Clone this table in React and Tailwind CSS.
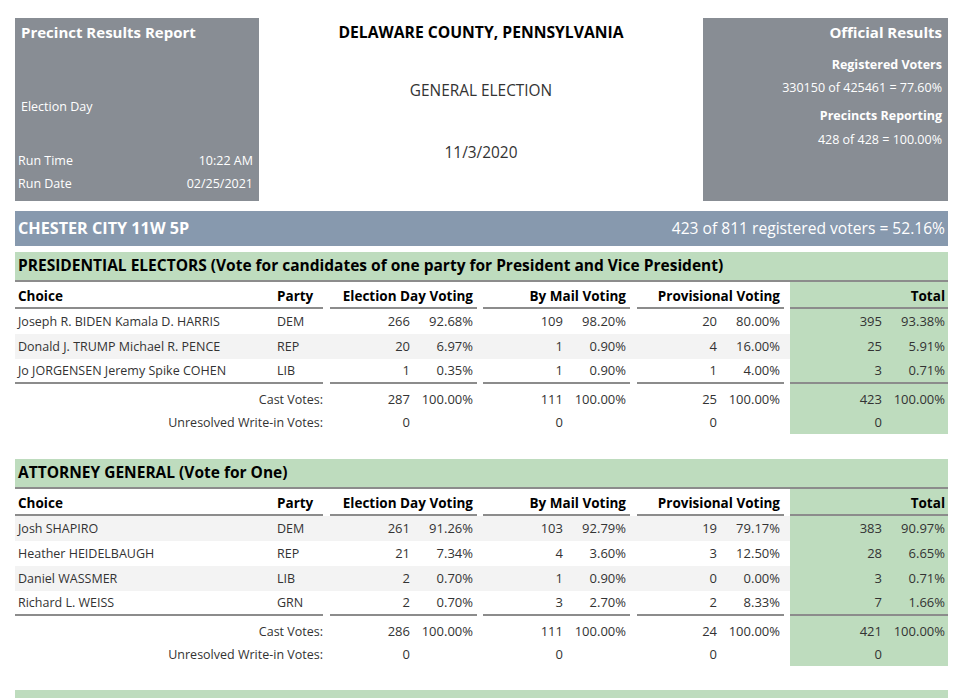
import React from "react";

const font = { fontFamily: '"Open Sans", "Noto Sans", sans-serif' };

const contests = [
  {
    title:
      "PRESIDENTIAL ELECTORS (Vote for candidates of one party for President and Vice President)",
    rows: [
      ["Joseph R. BIDEN Kamala D. HARRIS", "DEM", "266", "92.68%", "109", "98.20%", "20", "80.00%", "395", "93.38%"],
      ["Donald J. TRUMP Michael R. PENCE", "REP", "20", "6.97%", "1", "0.90%", "4", "16.00%", "25", "5.91%"],
      ["Jo JORGENSEN Jeremy Spike COHEN", "LIB", "1", "0.35%", "1", "0.90%", "1", "4.00%", "3", "0.71%"],
    ],
    shadeFirst: false,
    cast: ["287", "100.00%", "111", "100.00%", "25", "100.00%", "423", "100.00%"],
  },
  {
    title: "ATTORNEY GENERAL (Vote for One)",
    rows: [
      ["Josh SHAPIRO", "DEM", "261", "91.26%", "103", "92.79%", "19", "79.17%", "383", "90.97%"],
      ["Heather HEIDELBAUGH", "REP", "21", "7.34%", "4", "3.60%", "3", "12.50%", "28", "6.65%"],
      ["Daniel WASSMER", "LIB", "2", "0.70%", "1", "0.90%", "0", "0.00%", "3", "0.71%"],
      ["Richard L. WEISS", "GRN", "2", "0.70%", "3", "2.70%", "2", "8.33%", "7", "1.66%"],
    ],
    shadeFirst: true,
    cast: ["286", "100.00%", "111", "100.00%", "24", "100.00%", "421", "100.00%"],
  },
];

const line = "border-b-2 border-[#8c8c8c]";

const Pair = ({ a, b, underline, wide }) => (
  <div
    className={`flex h-full items-center ${wide ? "w-[158px] bg-[#bedcbe]" : "w-[147px]"} ${underline ? line : ""}`}
  >
    <div className={`${wide ? "w-[92px]" : "w-[80px]"} text-right`}>{a}</div>
    <div className="w-[63px] text-right">{b}</div>
  </div>
);

const Row = ({ cells, shaded, underline }) => (
  <div className="flex h-[25px] items-center text-[13px] text-[#333]">
    <div className={`flex h-full w-[775px] items-center ${shaded ? "bg-[#f3f3f3]" : ""}`}>
      <div className={`flex h-full w-[308px] items-center pt-[1px] text-[12.5px] ${underline ? line : ""}`}>
        <div className="w-[262px] pl-[3px]">{cells[0]}</div>
        <div>{cells[1]}</div>
      </div>
      <div className="w-[7px]" />
      <Pair a={cells[2]} b={cells[3]} underline={underline} />
      <div className="w-[6px]" />
      <Pair a={cells[4]} b={cells[5]} underline={underline} />
      <div className="w-[7px]" />
      <Pair a={cells[6]} b={cells[7]} underline={underline} />
    </div>
    <Pair a={cells[8]} b={cells[9]} underline={underline} wide />
  </div>
);

const SummaryRow = ({ label, vals }) => (
  <div className="flex h-[23px] items-center text-[13px] text-[#333]">
    <div className="flex h-full w-[775px] items-center">
      <div className="w-[308px] pt-[1px] text-right text-[12.5px]">{label}</div>
      <div className="w-[7px]" />
      <Pair a={vals[0]} b={vals[1]} />
      <div className="w-[6px]" />
      <Pair a={vals[2]} b={vals[3]} />
      <div className="w-[7px]" />
      <Pair a={vals[4]} b={vals[5]} />
    </div>
    <Pair a={vals[6]} b={vals[7]} wide />
  </div>
);

const Contest = ({ c }) => (
  <div>
    <div className={`flex h-[30px] items-center bg-[#bedcbe] pl-[3px] text-[15.5px] font-bold text-black ${line}`}>
      {c.title}
    </div>
    <div className="flex h-[27px] items-end text-[13.5px] font-bold text-black">
      <div className="flex h-full w-[775px] items-end">
        <div className={`flex w-[308px] pb-[1px] ${line}`}>
          <div className="w-[262px] pl-[3px]">Choice</div>
          <div>Party</div>
        </div>
        <div className="w-[7px]" />
        <div className={`w-[147px] pb-[1px] pr-[4px] text-right ${line}`}>Election Day Voting</div>
        <div className="w-[6px]" />
        <div className={`w-[147px] pb-[1px] pr-[4px] text-right ${line}`}>By Mail Voting</div>
        <div className="w-[7px]" />
        <div className={`w-[147px] pb-[1px] pr-[4px] text-right ${line}`}>Provisional Voting</div>
      </div>
      <div className={`flex h-full w-[158px] items-end justify-end bg-[#bedcbe] pr-[3px] pb-[1px] ${line}`}>
        Total
      </div>
    </div>
    {c.rows.map((r, i) => (
      <Row
        key={i}
        cells={r}
        shaded={c.shadeFirst ? i % 2 === 0 : i % 2 === 1}
        underline={i === c.rows.length - 1}
      />
    ))}
    <div className="flex h-[4px]">
      <div className="w-[775px]" />
      <div className="w-[158px] bg-[#bedcbe]" />
    </div>
    <SummaryRow label="Cast Votes:" vals={c.cast} />
    <SummaryRow label="Unresolved Write-in Votes:" vals={["0", "", "0", "", "0", "", "0", ""]} />
  </div>
);

export default function App() {
  return (
    <div className="h-[698px] overflow-hidden bg-white pl-[15px] pt-[18px]" style={font}>
      <div className="w-[933px]">
        <div className="flex h-[183px]">
          <div className="relative w-[244px] bg-[#888d94] text-white">
            <div className="pl-[6px] pt-[3px] text-[15px] font-bold">Precinct Results Report</div>
            <div className="pl-[6px] pt-[54px] text-[12.5px]">Election Day</div>
            <div className="absolute bottom-[6px] left-[3px] right-[6px] text-[12.5px]">
              <div className="flex justify-between leading-[23px]">
                <span>Run Time</span>
                <span>10:22 AM</span>
              </div>
              <div className="flex justify-between leading-[23px]">
                <span>Run Date</span>
                <span>02/25/2021</span>
              </div>
            </div>
          </div>
          <div className="flex flex-1 flex-col items-center">
            <div className="pt-[3px] text-[15.7px] font-bold text-black">DELAWARE COUNTY, PENNSYLVANIA</div>
            <div className="pt-[34px] text-[15.4px] text-[#333]">GENERAL ELECTION</div>
            <div className="pt-[39px] text-[15.4px] text-[#333]">11/3/2020</div>
          </div>
          <div className="w-[245px] bg-[#888d94] pr-[6px] text-right text-white">
            <div className="pt-[3px] text-[15px] font-bold">Official Results</div>
            <div className="pt-[12px] text-[12.5px] font-bold">Registered Voters</div>
            <div className="pt-[5px] text-[12.5px]">330150 of 425461 = 77.60%</div>
            <div className="pt-[9px] text-[12.5px] font-bold">Precincts Reporting</div>
            <div className="pt-[5px] text-[12.5px]">428 of 428 = 100.00%</div>
          </div>
        </div>

        <div className="mt-[10px] flex h-[35px] items-center justify-between bg-[#8799ae] px-[3px] text-white">
          <span className="text-[16.2px] font-bold">CHESTER CITY 11W 5P</span>
          <span className="text-[15.6px]">423 of 811 registered voters = 52.16%</span>
        </div>

        <div className="mt-[6px]">
          <Contest c={contests[0]} />
        </div>
        <div className="mt-[25px]">
          <Contest c={contests[1]} />
        </div>
        <div className="mt-[24px] h-[30px] bg-[#bedcbe]" />
      </div>
    </div>
  );
}
